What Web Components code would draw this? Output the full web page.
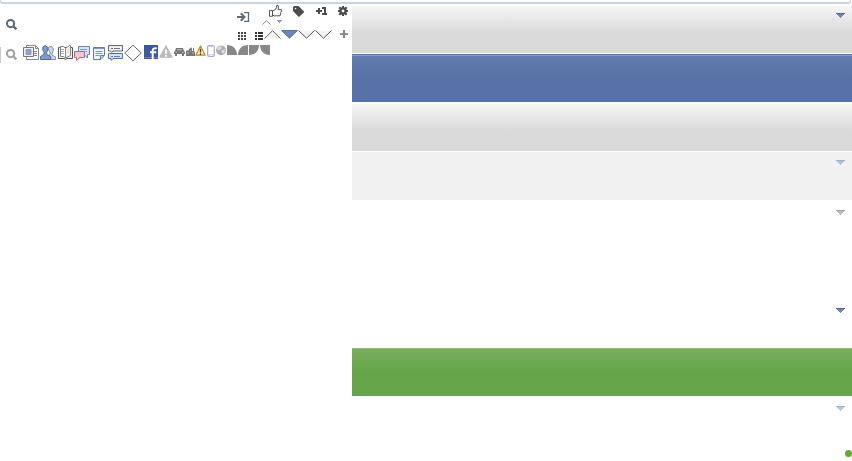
<!DOCTYPE html>
<html lang="en"><head><meta charset="utf-8"><title>Icon sheet</title>
<style>html,body{margin:0;background:#fff;overflow:hidden;font-family:"Liberation Sans",sans-serif}</style></head>
<body><icon-sheet></icon-sheet>
<script>
const svg=(w,h,body,attrs='')=>`<svg width="${w}" height="${h}" viewBox="0 0 ${w} ${h}" fill="none" ${attrs}>${body}</svg>`;
const crisp='shape-rendering="crispEdges"';
const search=c=>svg(11,11,`<circle cx="4.6" cy="4.6" r="3.6" stroke="${c}" stroke-width="2"/><path d="M7 7L10.3 10.2" stroke="${c}" stroke-width="2.4"/>`);
const chevron='<path d="M.5 .5L8.5 8.2L16.5 .5" fill="#f3f3f3" stroke="#555"/>';
const warn=(w,h,f,s,m)=>svg(w,h,`<path d="M${w/2} 1L${w-.8} ${h-.8}H.8Z" fill="${f}" stroke="${s}" stroke-width="1.2" stroke-linejoin="round"/><path d="M${w/2} ${h*.34}V${h*.68}M${w/2} ${h*.76}V${h*.9}" stroke="${m}" stroke-width="${w>12?2:1.3}"/>`);
const icons={
 search:search('#5d6672'), searchLight:search('#a0a0a0'),
 enter:svg(13,10,'<path d="M0 5H7M3.8 1.3L7.5 5L3.8 8.7" stroke="#626b78" stroke-width="2"/><path d="M7 .5H11.5V9.5H7" stroke="#626b78" stroke-width="1.3"/>'),
 thumb:svg(13,12,'<path d="M.5 5.5H3.5V11.3H.5ZM3.5 6L5.6 5.2L7.5 2.8V.6H9.2L9.5 3L9 4.6H12.3V7L11.6 7.6V9L11 10.8H5.2L3.5 10" stroke="#555"/>'),
 caret:svg(9,5,'<path d="M.5 4.5L4.5 .7L8.5 4.5" stroke="#888"/>'),
 tinyDown:svg(5,3,'<path d="M0 0H5V1H4V2H3V3H2V2H1V1H0Z" fill="#7f9acb"/>',crisp),
 tag:svg(11,11,'<path d="M0 1L1 0H5.5L11 5.5V6.2L6.2 10.7H5.5L0 5Z" fill="#4d4d4d"/><circle cx="2.5" cy="2.5" r=".8" fill="#eee"/>'),
 plusOne:svg(11,8,'<path d="M0 4H6M3 1V7" stroke="#4d4d4d" stroke-width="2"/><path d="M6 0H9.5V6H11V8H6V6H7.5V2H6Z" fill="#4d4d4d"/>',crisp),
 gear:svg(10,10,'<path d="M5 0V10M0 5H10M1.3 1.3L8.7 8.7M8.7 1.3L1.3 8.7" stroke="#4d4d4d" stroke-width="2"/><circle cx="5" cy="5" r="2.7" stroke="#4d4d4d" stroke-width="2"/><circle cx="5" cy="5" r="1.4" fill="#fff"/>'),
 grid:svg(8,8,'<path d="M0 1H8M0 4H8M0 7H8" stroke="#444" stroke-width="2" stroke-dasharray="2 1"/>',crisp),
 list:svg(8,8,'<path d="M0 1H2M3 1H8M0 4H2M3 4H8M0 7H2M3 7H8" stroke="#333" stroke-width="2"/>',crisp),
 up:svg(17,9,'<path d="M.5 8.5L8.5 .7L16.5 8.5" fill="#f3f3f3" stroke="#666"/>'),
 down:svg(17,9,'<path d="M.5 .5H16.5L8.5 8.2Z" fill="#6d84b4" stroke="#5973a5"/>'),
 chevron:svg(17,9,chevron),
 plus:svg(8,8,'<path d="M0 4H8M4 0V8" stroke="#8a8a8a" stroke-width="2"/>',crisp),
 papers:svg(16,15,'<path d="M3.5 .5H12.5L15.5 3.5V14.5H3.5Z" fill="#fff" stroke="#888"/><path d="M12.5 .5V3.5H15.5M10 6.5H14M10 8.5H14M10 10.5H14" stroke="#888"/><path d="M.5 2.5H10.5V11.5H.5Z" fill="#eef0f4" stroke="#777"/><path d="M3 4.5H8V9.5H3Z" fill="#8fa5cf" stroke="#728ab7" stroke-width=".7"/>'),
 people:svg(16,15,'<path d="M8.5 14.5V11L10 9V7L8.5 5V2.5L11 1.2L13.2 3V6L12 8V10L15.5 12V14.5Z" fill="#ced9e9" stroke="#7f8fad"/><path d="M.5 14.5V11.5L4 9.3V7L2.8 5V2.2L5.2 .6L7.7 2.2V5L6.7 7V9.3L10.7 11.5V14.5Z" fill="#829bca" stroke="#50699c"/>'),
 book:svg(15,15,'<path d="M.5 2.5H14.5V13.5H9L7.5 14.4L6 13.5H.5Z" fill="#eee" stroke="#555"/><path d="M2.5 1.5H6L7.5 3.5V13L6 11.5H2.5Z" fill="#fff" stroke="#888"/><path d="M7.5 3.5L11.5 .5H12.5V10.5L7.5 13Z" fill="#faf8eb" stroke="#888"/><path d="M3 4.5H6M3 6.5H6M3 8.5H6" stroke="#9aabca"/><path d="M9 5.5L11 4M9 8L11 6.5" stroke="#dccfa4"/>'),
 chat:svg(16,15,'<path d="M4.5 .5H15.5V8.5H13.5V12L10 8.5H4.5Z" fill="#d8e2f4" stroke="#6880b3"/><path d="M.5 5.5H10.5V11.5H6L2.5 14.5V11.5H.5Z" fill="#eec6d4" stroke="#a86b88"/><path d="M6 3.5H13M11.5 5.5H13" stroke="#8297bf"/>'),
 note:svg(12,13,'<path d="M.5 .5H11.5V8.5L8 12.5H.5Z" fill="#eef3fb" stroke="#627ca9"/><path d="M.5 1.5H11.5M2.5 4.5H9.5M2.5 6.5H9.5M2.5 8.5H6.5" stroke="#7f96bf"/><path d="M7.5 12V8.5H11" fill="#bac9e0" stroke="#627ca9"/>'),
 comments:svg(15,16,'<path d="M.5 .5H14.5V6H5L3.5 7.2L2.5 6H.5Z" fill="#eee" stroke="#666"/><path d="M.5 8.5H14.5V13.5H5L3 15.3V13.5H.5Z" fill="#d6e1f5" stroke="#526fa5"/><path d="M3 3.5H5M6 3.5H12" stroke="#777"/><path d="M3 11.5H5M6 11.5H12" stroke="#6480b3"/>'),
 diamond:svg(18,17,'<path d="M.7 8L9 .2L17.3 8L9 15.8Z" fill="#fff" stroke="#666"/>'),
 social:svg(14,14,'<path d="M0 0H14V14H0Z" fill="#3b5998"/><path d="M0 12.5H14" stroke="#6880b0"/><path d="M8.7 14V5.4Q8.7 3 12.7 3.2M6 7.2H12.3" stroke="#fff" stroke-width="2"/>'),
 warnGray:warn(14,13,'#bababa','#bababa','#fff'), warnYellow:warn(11,11,'#fff0a4','#b58c2d','#4b411d'),
 car:svg(11,8,'<path d="M2 0H9L10 3L11 4V6H10V8H8V6H3V8H1V6H0V4L1 3Z" fill="#777"/><path d="M3 1.5H8V2.2H3ZM1.5 4.2H3V5H1.5ZM8 4.2H9.5V5H8Z" fill="#ddd"/>'),
 city:svg(9,9,'<path d="M0 4L2 3L3 4V2L4.5 1L5 0L6 2V4H7V1H8V4L9 5V9H0Z" fill="#777"/><path d="M1 6H3M4 4H5M6 6H8" stroke="#bbb"/>'),
 phone:svg(8,12,'<rect x=".5" y=".5" width="7" height="11" rx="1" fill="#cdd4e5" stroke="#a3afcd"/><path d="M1.5 2H6.5V9H1.5Z" fill="#fff"/><path d="M3 10.5H5" stroke="#fff"/>'),
 globe:svg(10,11,'<circle cx="5" cy="5.3" r="4.9" fill="#aaa"/><path d="M2 2L5 1L6 3L4 5L2.5 5.4L1 4ZM6 5L9 4L8.5 7L6.5 9L5.3 7Z" fill="#ddd"/>'),
 tr:svg(10,10,'<path d="M0 0C6 0 10 4 10 10H0Z" fill="#888"/>'),
 tl:svg(10,10,'<path d="M10 0C4 0 0 4 0 10H10Z" fill="#888"/>'),
 br:svg(10,10,'<path d="M0 0H10C10 6 6 10 0 10Z" fill="#888"/>'),
 bl:svg(10,10,'<path d="M0 0H10V10C4 10 0 6 0 0Z" fill="#888"/>')
};
class SheetIcon extends HTMLElement{
 connectedCallback(){
  const root=this.attachShadow({mode:'open'});
  root.innerHTML=`<style>:host{display:block;flex:none;margin:${this.getAttribute('top')||0}px 0 0 ${this.getAttribute('gap')||0}px}svg{display:block}</style>${icons[this.getAttribute('name')]}`;
 }
}
customElements.define('sheet-icon',SheetIcon);
class IconRow extends HTMLElement{
 connectedCallback(){this.attachShadow({mode:'open'}).innerHTML='<style>:host{display:flex;align-items:flex-start}</style><slot></slot>'}
}
customElements.define('icon-row',IconRow);
class ColorBand extends HTMLElement{
 connectedCallback(){
  const arrow=this.getAttribute('arrow');
  this.attachShadow({mode:'open'}).innerHTML=`<style>:host{display:flex;justify-content:flex-end;box-sizing:border-box;padding:8px 7px 0 0}
  :host([tone=gray]){background:linear-gradient(#f6f6f6,#dadada 55%,#dadada)}
  :host([tone=blue]){background:linear-gradient(#637bad,#5872a7 50%,#5872a7);border-top:1px solid #5f78ab;box-shadow:inset 0 1px #8a9cc2}
  :host([tone=pale]){background:#f1f1f1}
  :host([tone=green]){background:linear-gradient(#79ae5d,#67a54b 45%,#67a54b);border-top:1px solid #8dba77}
  svg{display:block}</style>${arrow?svg(9,5,`<path d="M0 0H9V1H8V2H7V3H6V4H5V5H4V4H3V3H2V2H1V1H0Z" fill="${arrow}"/><path d="M0 .5H9" stroke="${this.getAttribute('edge')}"/>`,crisp):''}`;
 }
}
customElements.define('color-band',ColorBand);
class IconSheet extends HTMLElement{
 connectedCallback(){this.attachShadow({mode:'open'}).innerHTML=`<style>
 :host{display:grid;width:852px;height:461px;grid-template:4px 457px / 352px 500px}
 .frame{grid-column:1/3;box-sizing:border-box;width:851px;height:4px;border:solid #c9d3e9;border-width:0 1px 2px;border-radius:0 0 3px 3px}
 .tools{display:grid;grid-template-rows:24px 16px 20px;align-content:start}
 .thumbs{width:22px;margin-left:12px}
 .bar{width:1px;height:16px;background:#ccc;margin-top:3px}
 .bands{display:flex;flex-direction:column}
 .bands color-band{height:48px;flex:none}
 .dot{width:7px;height:7px;border-radius:50%;background:#67a932;align-self:flex-end;margin-top:6px}
 </style>
 <div class="frame"></div>
 <div class="tools">
 <icon-row><sheet-icon name="search" gap="6" top="15"></sheet-icon><sheet-icon name="enter" gap="220" top="8"></sheet-icon>
 <div class="thumbs"><sheet-icon name="thumb" gap="7" top="1"></sheet-icon><icon-row><sheet-icon name="caret" top="3"></sheet-icon><sheet-icon name="tinyDown" gap="6" top="3"></sheet-icon></icon-row></div>
 <sheet-icon name="tag" gap="9" top="2"></sheet-icon><sheet-icon name="plusOne" gap="12" top="3"></sheet-icon><sheet-icon name="gear" gap="11" top="2"></sheet-icon></icon-row>
 <icon-row><sheet-icon name="grid" gap="238" top="4"></sheet-icon><sheet-icon name="list" gap="9" top="4"></sheet-icon><sheet-icon name="up" gap="1" top="2"></sheet-icon><sheet-icon name="down" top="2"></sheet-icon><sheet-icon name="chevron" top="2"></sheet-icon><sheet-icon name="chevron" top="2"></sheet-icon><sheet-icon name="plus" gap="8" top="2"></sheet-icon></icon-row>
 <icon-row><div class="bar"></div><sheet-icon name="searchLight" gap="5" top="5"></sheet-icon><sheet-icon name="papers" gap="6" top="1"></sheet-icon><sheet-icon name="people" gap="1" top="1"></sheet-icon><sheet-icon name="book" gap="2" top="1"></sheet-icon><sheet-icon name="chat" gap="1" top="2"></sheet-icon><sheet-icon name="note" gap="3" top="3"></sheet-icon><sheet-icon name="comments" gap="3" top="1"></sheet-icon><sheet-icon name="diamond" gap="1" top="1"></sheet-icon><sheet-icon name="social" gap="2" top="1"></sheet-icon><sheet-icon name="warnGray" gap="1" top="1"></sheet-icon><sheet-icon name="car" gap="1" top="4"></sheet-icon><sheet-icon name="city" gap="1" top="3"></sheet-icon><sheet-icon name="warnYellow" top="1"></sheet-icon><sheet-icon name="phone" gap="1" top="1"></sheet-icon><sheet-icon name="globe" gap="1" top="1"></sheet-icon><sheet-icon name="tr" gap="1" top="1"></sheet-icon><sheet-icon name="tl" gap="1" top="1"></sheet-icon><sheet-icon name="br" gap="1" top="1"></sheet-icon><sheet-icon name="bl" gap="1" top="1"></sheet-icon></icon-row>
 </div>
 <div class="bands">
 <color-band tone="gray" style="height:47px;margin-top:2px;padding-top:7px" arrow="#7187b5" edge="#4e689d"></color-band>
 <color-band tone="blue" style="margin-top:1px"></color-band>
 <color-band tone="gray" style="height:47px;margin-top:2px"></color-band>
 <color-band tone="pale" style="margin-top:1px" arrow="#b5c2df" edge="#9caed1"></color-band>
 <color-band style="padding-top:10px" arrow="#bcbcbc" edge="#a5a5a5"></color-band>
 <color-band style="margin-top:52px" arrow="#7187b5" edge="#4e689d"></color-band>
 <color-band tone="green"></color-band>
 <color-band style="padding-top:10px" arrow="#bac5df" edge="#9caed1"></color-band>
 <div class="dot"></div>
 </div>`}
}
customElements.define('icon-sheet',IconSheet);
</script></body></html>
